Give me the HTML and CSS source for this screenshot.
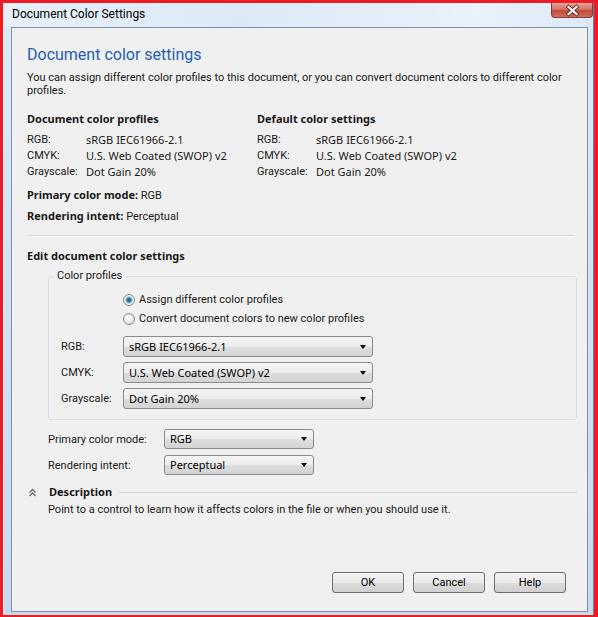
FILE: index.html
```html
<!DOCTYPE html>
<html lang="en">
<head>
  <meta charset="UTF-8">
  <title>Document Color Settings</title>
  <link rel="stylesheet" href="styles.css">
</head>
<body>
  <div class="window">
    <div class="titlebar">
      <span class="title">Document Color Settings</span>
      <div class="close">
        <svg width="42" height="15" viewBox="0 0 42 15">
          <path d="M17.5 4 L25.5 11 M25.5 4 L17.5 11" stroke="#6b2620" stroke-width="4" stroke-linecap="square"/>
          <path d="M17.5 4 L25.5 11 M25.5 4 L17.5 11" stroke="#fff" stroke-width="2.2" stroke-linecap="square"/>
        </svg>
      </div>
    </div>

    <div class="panel">
      <h1>Document color settings</h1>
      <p class="intro">You can assign different color profiles to this document, or you can convert document colors to different color profiles.</p>

      <div class="columns">
        <div class="profiles">
          <h2>Document color profiles</h2>
          <div class="row"><span class="key">RGB:</span><span class="val">sRGB IEC61966-2.1</span></div>
          <div class="row"><span class="key">CMYK:</span><span class="val">U.S. Web Coated (SWOP) v2</span></div>
          <div class="row"><span class="key">Grayscale:</span><span class="val">Dot Gain 20%</span></div>
        </div>
        <div class="profiles">
          <h2>Default color settings</h2>
          <div class="row"><span class="key">RGB:</span><span class="val">sRGB IEC61966-2.1</span></div>
          <div class="row"><span class="key">CMYK:</span><span class="val">U.S. Web Coated (SWOP) v2</span></div>
          <div class="row"><span class="key">Grayscale:</span><span class="val">Dot Gain 20%</span></div>
        </div>
      </div>

      <p class="summary"><b>Primary color mode:</b> RGB</p>
      <p class="summary"><b>Rendering intent:</b> Perceptual</p>

      <div class="divider"></div>

      <h2 class="edit">Edit document color settings</h2>

      <fieldset class="group">
        <legend>Color profiles</legend>
        <label class="radio"><span class="dot checked"></span>Assign different color profiles</label>
        <label class="radio"><span class="dot"></span>Convert document colors to new color profiles</label>
        <div class="field"><span class="field-label">RGB:</span><div class="combo">sRGB IEC61966-2.1<i class="arrow"></i></div></div>
        <div class="field"><span class="field-label">CMYK:</span><div class="combo">U.S. Web Coated (SWOP) v2<i class="arrow"></i></div></div>
        <div class="field"><span class="field-label">Grayscale:</span><div class="combo">Dot Gain 20%<i class="arrow"></i></div></div>
      </fieldset>

      <div class="field outer"><span class="field-label">Primary color mode:</span><div class="combo">RGB<i class="arrow"></i></div></div>
      <div class="field outer"><span class="field-label">Rendering intent:</span><div class="combo">Perceptual<i class="arrow"></i></div></div>

      <div class="desc-head">
        <svg class="chevrons" width="7" height="9" viewBox="0 0 7 9">
          <path d="M0.5 4.5 L3.5 1.5 L6.5 4.5 M0.5 8 L3.5 5 L6.5 8" fill="none" stroke="#707070" stroke-width="1.4"/>
        </svg>
        <b>Description</b>
        <span class="rule"></span>
      </div>
      <p class="desc">Point to a control to learn how it affects colors in the file or when you should use it.</p>

      <div class="buttons">
        <button>OK</button>
        <button>Cancel</button>
        <button>Help</button>
      </div>
    </div>
  </div>
</body>
</html>
```

FILE: styles.css
```css
body {
  margin: 0;
  background-color: #ed1c24;
  font-family: Roboto, 'Noto Sans', sans-serif;
  font-size: 11px;
  color: #1a1a1a;
}

b, h2 {
  font-family: 'Noto Sans', sans-serif;
  font-weight: bold;
}

.window {
  box-sizing: border-box;
  width: 591px;
  height: 612px;
  margin: 3px 0 0 3px;
  display: flex;
  flex-direction: column;
  background: linear-gradient(to bottom, #dce9f7, #c8daee);
  border-right: 1px solid #6f8299;
  border-left: 1px solid #f3f7fc;
}

.titlebar {
  height: 24px;
  flex-shrink: 0;
  display: flex;
  align-items: flex-start;
  padding-left: 8px;
  background: linear-gradient(100deg, rgba(255,255,255,0.35) 0%, rgba(255,255,255,0) 40%, rgba(255,255,255,0.4) 80%, rgba(255,255,255,0) 100%);
}

.title {
  margin-top: 3px;
  font-size: 12px;
  line-height: 16px;
  color: #000;
}

.close {
  margin-left: auto;
  margin-right: 0;
  width: 42px;
  height: 15px;
  box-sizing: border-box;
  border: 1px solid #8b3a33;
  border-top: none;
  border-radius: 0 0 4px 4px;
  background: linear-gradient(to bottom, #e3a599 0%, #d27566 45%, #c24a3a 55%, #cf6e5e 100%);
  line-height: 0;
}

.close svg {
  margin-left: -1px;
}

.panel {
  flex: 1;
  margin: 0 5px 3px 7px;
  border: 1px solid #7d91a8;
  background-color: #f0f0f0;
  padding: 17px 10px 18px 15px;
  display: flex;
  flex-direction: column;
}

h1 {
  margin: 0;
  font-size: 16px;
  line-height: 20px;
  font-weight: normal;
  color: #1f5fae;
}

.intro {
  max-width: 540px;
  margin: 6px 0 0;
  line-height: 13px;
}

.columns {
  display: flex;
  margin-top: 14px;
}

.profiles {
  width: 230px;
}

.profiles h2 {
  margin: 0 0 5px;
  font-size: 11px;
  line-height: 16px;
}

.row {
  display: flex;
  line-height: 16px;
}

.key {
  width: 59px;
}

.val {
  font-family: 'Noto Sans', sans-serif;
}

.summary {
  margin: 7px 0 0;
  line-height: 16px;
}

.summary + .summary {
  margin-top: 4px;
}

.divider {
  margin: 10px 3px 0 0;
  height: 1px;
  background-color: #d5d5d5;
  border-bottom: 1px solid #fff;
}

.edit {
  margin: 11px 0 0;
  font-size: 11px;
  line-height: 16px;
}

.group {
  margin: 4px 0 0 21px;
  padding: 6px 10px 10px 5px;
  border: 1px solid #d5dfe5;
  border-radius: 3px;
}

.group legend {
  padding: 0 3px;
  line-height: 16px;
}

.radio {
  display: flex;
  align-items: center;
  height: 19px;
  margin-left: 69px;
}

.dot {
  width: 10px;
  height: 10px;
  margin-right: 4px;
  border: 1px solid #8a8b8c;
  border-radius: 50%;
  background: radial-gradient(circle at 40% 35%, #ffffff 0%, #e6e6e6 60%, #cfcfcf 100%);
}

.dot.checked {
  background: radial-gradient(circle at 50% 50%, #1d5f86 0%, #2d7aa6 28%, #9cc6dc 45%, #f4f4f4 60%, #d9d9d9 100%);
}

.field {
  display: flex;
  align-items: center;
}

.group .field {
  padding-left: 7px;
  margin-top: 5px;
}

.group .radio + .field {
  margin-top: 8px;
}

.group .field-label {
  width: 62px;
}

.combo {
  box-sizing: border-box;
  position: relative;
  width: 250px;
  height: 21px;
  padding-left: 5px;
  line-height: 19px;
  border: 1px solid #8b8b8b;
  border-radius: 3px;
  background: linear-gradient(to bottom, #f5f5f5 0%, #ececec 50%, #dedede 51%, #d3d3d3 100%);
  font-family: 'Noto Sans', sans-serif;
  color: #000;
}

.arrow {
  position: absolute;
  right: 6px;
  top: 8px;
  width: 0;
  height: 0;
  border-left: 3.5px solid transparent;
  border-right: 3.5px solid transparent;
  border-top: 4px solid #000;
}

.field.outer {
  margin-left: 21px;
  margin-top: 6px;
}

.group + .field.outer {
  margin-top: 9px;
}

.outer .field-label {
  width: 116px;
}

.outer .combo {
  width: 150px;
  height: 20px;
  line-height: 18px;
}

.outer .arrow {
  top: 7px;
}

.desc-head {
  display: flex;
  align-items: center;
  margin-top: 11px;
  line-height: 12px;
}

.chevrons {
  margin-left: 2px;
  margin-right: 13px;
}

.rule {
  flex: 1;
  height: 1px;
  margin-left: 7px;
  background-color: #d5d5d5;
}

.desc {
  margin: 5px 0 0 21px;
  line-height: 14px;
}

.buttons {
  margin-top: auto;
  display: flex;
  justify-content: flex-end;
  gap: 9px;
  padding-right: 11px;
}

button {
  width: 72px;
  height: 21px;
  padding: 0;
  font-family: Roboto, sans-serif;
  font-size: 11px;
  color: #000;
  border: 1px solid #707070;
  border-radius: 3px;
  background: linear-gradient(to bottom, #f2f2f2 0%, #ebebeb 50%, #dddddd 51%, #cfcfcf 100%);
}
```
